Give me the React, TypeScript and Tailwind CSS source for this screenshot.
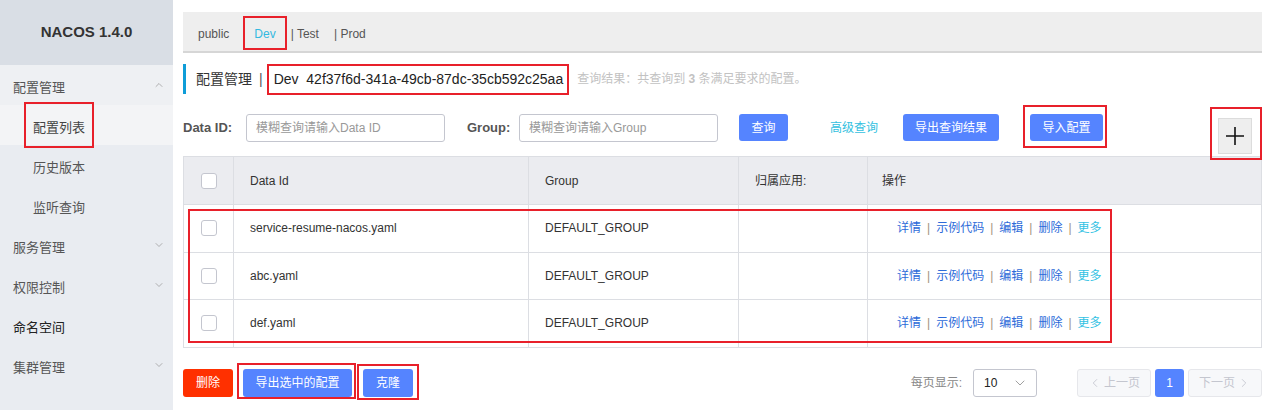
import { ChevronDown, ChevronUp, ChevronLeft, ChevronRight } from "lucide-react";

const FONT = { fontFamily: '"Liberation Sans", "Noto Sans CJK SC", sans-serif' };

const menu = [
  { label: "历史版本", sub: true },
  { label: "监听查询", sub: true },
  { label: "服务管理", arrow: true },
  { label: "权限控制", arrow: true },
  { label: "命名空间", dark: true },
  { label: "集群管理", arrow: true },
];

const rows = ["service-resume-nacos.yaml", "abc.yaml", "def.yaml"];

const Box = ({ className }: { className: string }) => (
  <span className={`pointer-events-none absolute border-2 border-[#e8202a] ${className}`} />
);

const Check = () => (
  <span className="block h-4 w-4 rounded-[3px] border border-[#c4c6cf] bg-white" />
);

export default function App() {
  return (
    <div style={FONT} className="flex h-[410px] w-[1272px] overflow-hidden bg-white text-[#333]">
      {/* SIDEBAR */}
      <aside className="w-[173px] shrink-0 bg-[#e9ecf1]">
        <div className="flex h-[65px] items-center justify-center bg-[#d9dee5] text-[15px] font-bold text-[#333]">
          NACOS 1.4.0
        </div>
        <div className="flex h-[40px] items-center justify-between bg-[#eef0f3] pl-[13px] pr-[8px] pt-[6px] text-[13px] text-[#555]">
          <span>配置管理</span>
          <ChevronUp size={12} strokeWidth={1.5} className="-mt-[6px] text-[#999]" />
        </div>
        <div className="flex h-[40px] items-center bg-[#f3f4f6] pl-[33px] pt-[6px] text-[13px] text-[#444]">
          <span className="relative">
            配置列表
            <Box className="-top-[16px] -bottom-[10px] -left-[9px] -right-[9px]" />
          </span>
        </div>
        {menu.map((m) => (
          <div
            key={m.label}
            className={`flex h-[40px] items-center justify-between pr-[8px] pt-[6px] text-[13px] ${m.sub ? "pl-[33px]" : "pl-[13px]"} ${m.dark ? "text-[#222]" : "text-[#555]"}`}
          >
            <span>{m.label}</span>
            {m.arrow && <ChevronDown size={12} strokeWidth={1.5} className="-mt-[6px] text-[#999]" />}
          </div>
        ))}
      </aside>

      {/* MAIN */}
      <main className="flex-1 pl-[10px] pr-[10px] pt-[12px]">
        {/* namespace tabs */}
        <div className="flex h-[41px] items-center border-b-2 border-[#d6d6d6] bg-[#eeeeee] pl-[15px] pt-[5px] text-[12px] text-[#555]">
          <span>public</span>
          <span className="relative ml-[25px] text-[#33b9e0]">
            Dev
            <Box className="-top-[9px] -bottom-[7px] -left-[11px] -right-[11px]" />
          </span>
          <span className="ml-[15px]">| Test</span>
          <span className="ml-[15px]">| Prod</span>
        </div>

        {/* title */}
        <div className="mt-[11px] flex h-[30px] items-center border-l-[3px] border-[#0e9dd8] pl-[10px]">
          <span className="text-[14px] text-[#333]">配置管理</span>
          <span className="ml-[7px] text-[14px] text-[#555]">|</span>
          <span className="relative ml-[11px] text-[14px] text-[#222]">
            Dev&nbsp;&nbsp;42f37f6d-341a-49cb-87dc-35cb592c25aa
            <Box className="-top-[5px] -bottom-[5px] -left-[7px] -right-[6px]" />
          </span>
          <span className="ml-[14px] text-[12px] text-[#c2c2c2]">
            查询结果：共查询到 <b className="font-bold">3</b> 条满足要求的配置。
          </span>
        </div>

        {/* search row */}
        <div className="mt-[20px] flex items-start text-[12px]">
          <div className="flex h-[28px] w-[63px] items-center text-[13px] font-bold text-[#555]">Data ID:</div>
          <div className="flex h-[28px] w-[199px] items-center rounded-[3px] border border-[#c4c6cf] pl-[9px] text-[#999]">
            模糊查询请输入Data ID
          </div>
          <div className="ml-[22px] flex h-[28px] w-[52px] items-center text-[13px] font-bold text-[#555]">Group:</div>
          <div className="flex h-[28px] w-[199px] items-center rounded-[3px] border border-[#c4c6cf] pl-[9px] text-[#999]">
            模糊查询请输入Group
          </div>
          <button className="ml-[21px] h-[27px] w-[49px] rounded-[3px] bg-[#5584ff] text-white">查询</button>
          <span className="ml-[42px] flex h-[28px] items-center text-[#33bfe0]">高级查询</span>
          <button className="ml-[25px] h-[27px] w-[96px] rounded-[3px] bg-[#5584ff] text-white">导出查询结果</button>
          <span className="relative ml-[31px]">
            <button className="h-[27px] w-[73px] rounded-[3px] bg-[#5584ff] text-white">导入配置</button>
            <Box className="-top-[9px] -bottom-[7px] -left-[7px] -right-[4px]" />
          </span>
          <span className="relative ml-auto mr-[10px] mt-[4px]">
            <span className="flex h-[36px] w-[34px] items-center justify-center border border-[#dcdcdc] bg-[#eeeeee]">
              <svg width="22" height="22" viewBox="0 0 22 22">
                <path d="M11 2v18M2 11h18" stroke="#111" strokeWidth="1.6" />
              </svg>
            </span>
            <Box className="-top-[11px] -bottom-[6px] -left-[8px] -right-[10px]" />
          </span>
        </div>

        {/* table */}
        <div className="mt-[2px] border border-[#dcdee3] text-[12px]">
          <div className="grid h-[47px] grid-cols-[50px_295px_210px_129px_1fr] bg-[#ebecf0] text-[#333]">
            <div className="flex items-center justify-center border-r border-[#dcdee3]"><Check /></div>
            <div className="flex items-center border-r border-[#dcdee3] pl-[16px]">Data Id</div>
            <div className="flex items-center border-r border-[#dcdee3] pl-[16px]">Group</div>
            <div className="flex items-center border-r border-[#dcdee3] pl-[16px]">归属应用:</div>
            <div className="flex items-center pl-[14px]">操作</div>
          </div>
          <div className="relative">
            {rows.map((r) => (
              <div key={r} className="grid h-[47.5px] grid-cols-[50px_295px_210px_129px_1fr] border-t border-[#dcdee3]">
                <div className="flex items-center justify-center border-r border-[#dcdee3]"><Check /></div>
                <div className="flex items-center border-r border-[#dcdee3] pl-[16px]">{r}</div>
                <div className="flex items-center border-r border-[#dcdee3] pl-[16px]">DEFAULT_GROUP</div>
                <div className="border-r border-[#dcdee3]" />
                <div className="flex items-center pl-[29px] text-[#2d6bd9]">
                  <span>详情</span>
                  <span className="mx-[6px] text-[#a0937d]">|</span>
                  <span>示例代码</span>
                  <span className="mx-[6px] text-[#a0937d]">|</span>
                  <span>编辑</span>
                  <span className="mx-[6px] text-[#a0937d]">|</span>
                  <span>删除</span>
                  <span className="mx-[6px] text-[#a0937d]">|</span>
                  <span className="text-[#33c2e3]">更多</span>
                </div>
              </div>
            ))}
            <Box className="top-[5px] bottom-[4px] left-[4px] w-[924px]" />
          </div>
        </div>

        {/* footer */}
        <div className="mt-[21px] flex h-[28px] items-center text-[12px]">
          <button className="h-[28px] w-[50px] rounded-[3px] bg-[#ff3000] text-white">删除</button>
          <span className="relative ml-[10px]">
            <button className="block h-[28px] w-[109px] rounded-[3px] bg-[#5584ff] text-white">导出选中的配置</button>
            <Box className="-top-[6px] -bottom-[2px] -left-[6px] -right-[4px]" />
          </span>
          <span className="relative ml-[11px]">
            <button className="block h-[28px] w-[50px] rounded-[3px] bg-[#5584ff] text-white">克隆</button>
            <Box className="-top-[5px] -bottom-[3px] -left-[6px] -right-[6px]" />
          </span>

          <span className="ml-auto text-[#888]">每页显示:</span>
          <div className="ml-[11px] flex h-[28px] w-[64px] items-center justify-between rounded-[3px] border border-[#c4c6cf] pl-[10px] pr-[8px] text-[#222]">
            <span>10</span>
            <ChevronDown size={16} strokeWidth={1.2} className="text-[#888]" />
          </div>
          <div className="ml-[40px] flex h-[28px] w-[74px] items-center justify-center gap-[2px] rounded-[3px] border border-[#e6e7eb] bg-[#f7f8fa] text-[#c4c6cf]">
            <ChevronLeft size={14} strokeWidth={1.5} />
            <span>上一页</span>
          </div>
          <div className="ml-[4px] flex h-[28px] w-[29px] items-center justify-center rounded-[3px] bg-[#5584ff] text-white">1</div>
          <div className="ml-[4px] flex h-[28px] w-[74px] items-center justify-center gap-[2px] rounded-[3px] border border-[#e6e7eb] bg-[#f7f8fa] text-[#c4c6cf]">
            <span>下一页</span>
            <ChevronRight size={14} strokeWidth={1.5} />
          </div>
        </div>
      </main>
    </div>
  );
}
